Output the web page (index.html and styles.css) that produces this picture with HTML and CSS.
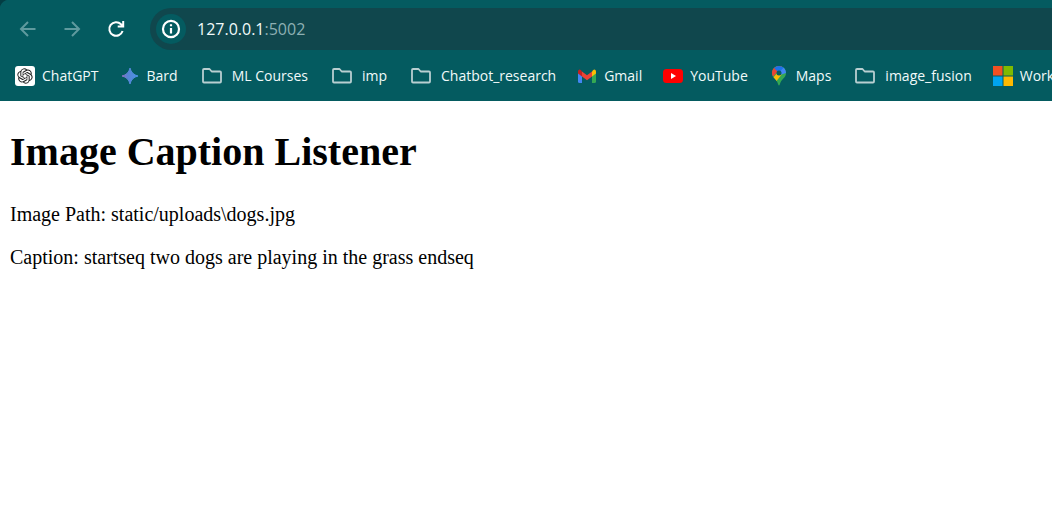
FILE: index.html
```html
<!DOCTYPE html>
<html lang="en">
<head>
<meta charset="utf-8">
<title>Image Caption Listener</title>
<link rel="stylesheet" href="styles.css">
</head>
<body>
<svg class="defs" aria-hidden="true">
  <symbol id="folder" viewBox="0 0 20 20"><path d="M2 3H7.500L9.700 5.500H18Q19 5.500 19 6.500V15.500Q19 16.500 18 16.500H2Q1 16.500 1 15.500V4Q1 3 2 3Z" fill="none" stroke="#b9cfd1" stroke-width="1.800" stroke-linejoin="round"/></symbol>
</svg>
<header class="browser">
  <div class="toolbar">
    <button class="nav dim" aria-label="Back"><svg viewBox="0 0 20 20"><path d="M17.500 10H3.500M10 3L3 10L10 17" /></svg></button>
    <button class="nav dim" aria-label="Forward"><svg viewBox="0 0 20 20"><path d="M2.500 10H16.500M10 3L17 10L10 17"/></svg></button>
    <button class="nav" aria-label="Reload"><svg viewBox="0 0 20 20"><path d="M16.600 12A6.800 6.800 0 1 1 15 5.200L17 7.200M17.200 2V7.500H11.700"/></svg></button>
    <div class="address">
      <button class="info" aria-label="Site information"><svg viewBox="0 0 20 20"><circle cx="10" cy="10" r="7.300"/><path d="M10 9V14M10 5.600V7.600"/></svg></button>
      <span class="url">127.0.0.1<span class="port">:5002</span></span>
    </div>
  </div>
  <nav class="bookmarks" aria-label="Bookmarks">
    <a class="mark" href="#"><svg viewBox="0 0 20 20"><rect width="20" height="20" rx="3" fill="#fff"/><path transform="translate(2.300 2.300) scale(.64)" fill="#222" d="M22.2819 9.8211a5.9847 5.9847 0 0 0-.5157-4.9108 6.0462 6.0462 0 0 0-6.5098-2.9A6.0651 6.0651 0 0 0 4.9807 4.1818a5.9847 5.9847 0 0 0-3.9977 2.9 6.0462 6.0462 0 0 0 .7427 7.0966 5.98 5.98 0 0 0 .511 4.9107 6.051 6.051 0 0 0 6.5146 2.9001A5.9847 5.9847 0 0 0 13.2599 24a6.0557 6.0557 0 0 0 5.7718-4.2058 5.9894 5.9894 0 0 0 3.9977-2.9001 6.0557 6.0557 0 0 0-.7475-7.0729zm-9.022 12.6081a4.4755 4.4755 0 0 1-2.8764-1.0408l.1419-.0804 4.7783-2.7582a.7948.7948 0 0 0 .3927-.6813v-6.7369l2.02 1.1686a.071.071 0 0 1 .038.052v5.5826a4.504 4.504 0 0 1-4.4945 4.4944zm-9.6607-4.1254a4.4708 4.4708 0 0 1-.5346-3.0137l.142.0852 4.783 2.7582a.7712.7712 0 0 0 .7806 0l5.8428-3.3685v2.3324a.0804.0804 0 0 1-.0332.0615L9.74 19.9502a4.4992 4.4992 0 0 1-6.1408-1.6464zM2.3408 7.8956a4.485 4.485 0 0 1 2.3655-1.9728V11.6a.7664.7664 0 0 0 .3879.6765l5.8144 3.3543-2.0201 1.1685a.0757.0757 0 0 1-.071 0l-4.8303-2.7865A4.504 4.504 0 0 1 2.3408 7.872zm16.5963 3.8558L13.1038 8.364 15.1192 7.2a.0757.0757 0 0 1 .071 0l4.8303 2.7913a4.4944 4.4944 0 0 1-.6765 8.1042v-5.6772a.79.79 0 0 0-.407-.667zm2.0107-3.0231l-.142-.0852-4.7735-2.7818a.7759.7759 0 0 0-.7854 0L9.409 9.2297V6.8974a.0662.0662 0 0 1 .0284-.0615l4.8303-2.7866a4.4992 4.4992 0 0 1 6.6802 4.66zM8.3065 12.863l-2.02-1.1638a.0804.0804 0 0 1-.038-.0567V6.0742a4.4992 4.4992 0 0 1 7.3757-3.4537l-.142.0805L8.704 5.459a.7948.7948 0 0 0-.3927.6813zm1.0976-2.3654l2.602-1.4998 2.6069 1.4998v2.9994l-2.5974 1.4997-2.6067-1.4997Z"/></svg>ChatGPT</a>
    <a class="mark" href="#"><svg viewBox="0 0 20 20"><defs><linearGradient id="spark" x1="0" x2="1"><stop stop-color="#8d6fc0"/><stop offset=".35" stop-color="#5684d4"/><stop offset="1" stop-color="#4a93e6"/></linearGradient></defs><path d="M10 2Q11.500 8.500 18 10Q11.500 11.500 10 18Q8.500 11.500 2 10Q8.500 8.500 10 2Z" fill="url(#spark)" stroke="url(#spark)"/></svg>Bard</a>
    <a class="mark folder" href="#"><svg><use href="#folder"/></svg>ML Courses</a>
    <a class="mark folder" href="#"><svg><use href="#folder"/></svg>imp</a>
    <a class="mark folder" href="#"><svg><use href="#folder"/></svg>Chatbot_research</a>
    <a class="mark" href="#"><svg viewBox="0 0 20 20"><path d="M1 6V15.500Q1 17 2.500 17H5V9Z" fill="#4285f4"/><path d="M19 6V15.500Q19 17 17.500 17H15V9Z" fill="#34a853"/><path d="M15 5.500L16 4.200Q17.500 3 18.600 4.300Q19 5 19 6V7.500L15 10.500Z" fill="#fbbc04"/><path d="M5 5.500L10 9.300L15 5.500V10.500L10 14.300L5 10.500Z" fill="#ea4335"/><path d="M5 5.500L4 4.200Q2.500 3 1.400 4.300Q1 5 1 6V7.500L5 10.500Z" fill="#c5221f"/></svg>Gmail</a>
    <a class="mark" href="#"><svg viewBox="0 0 20 20"><rect y="3" width="20" height="14" rx="3.500" fill="#f00"/><path d="M8 7L13 10L8 13Z" fill="#fff"/></svg>YouTube</a>
    <a class="mark" href="#"><svg viewBox="0 0 20 20"><defs><clipPath id="pin"><path d="M10 0C6 0 3 3 3 7C3 12 8 13 9.200 18.500Q10 20.500 10.800 18.500C12 13 17 12 17 7C17 3 14 0 10 0Z"/></clipPath></defs><g clip-path="url(#pin)"><path d="M0 0H20V20H0Z" fill="#34a853"/><path d="M0 15L14 0H0Z" fill="#ea4335"/><path d="M3 13L10 5L13 8L6 17Z" fill="#fbbc04"/><path d="M5 2L10 7L17 0H7Z" fill="#1a73e8"/><path d="M8 9L16 0L20 6L11 9Z" fill="#4285f4"/></g><circle cx="10" cy="7" r="2.500" fill="#075d62"/></svg>Maps</a>
    <a class="mark folder" href="#"><svg><use href="#folder"/></svg>image_fusion</a>
    <a class="mark" href="#"><svg viewBox="0 0 20 20"><path d="M0 0H9.500V9.500H0Z" fill="#f25022"/><path d="M10.500 0H20V9.500H10.500Z" fill="#7fba00"/><path d="M0 10.500H9.500V20H0Z" fill="#00a4ef"/><path d="M10.500 10.500H20V20H10.500Z" fill="#ffb900"/></svg>Work</a>
  </nav>
</header>
<main class="content">
  <h1>Image Caption Listener</h1>
  <p>Image Path: static/uploads\dogs.jpg</p>
  <p>Caption: startseq two dogs are playing in the grass endseq</p>
</main>
</body>
</html>
```
FILE: styles.css
```css
body {
  margin: 0;
  background: #fff;
  color: #000;
  font-family: "Liberation Serif", serif;
}

.defs {
  display: block;
  width: 0;
  height: 0;
}

.browser {
  overflow: hidden;
  background: radial-gradient(circle at 10px 10px, #045b60 10px, #033d43 11px) 0 0 / 10px 10px no-repeat, linear-gradient(#045b60, #045b60) 10px 0 no-repeat, linear-gradient(#045b60, #045b60) 0 10px no-repeat;
  color: #f1fafa;
  font-family: "Open Sans", "Noto Sans", sans-serif;
}

.toolbar {
  display: flex;
  align-items: center;
  padding: 8px 0 0 17px;
}

.nav,
.info {
  display: flex;
  padding: 0;
  border: 0;
  background: none;
  color: #fff;
}

.nav {
  flex: none;
  margin-right: 23px;
}

.nav svg,
.info svg {
  width: 22px;
  height: 22px;
  fill: none;
  stroke: currentColor;
  stroke-width: 2;
}

.nav.dim {
  margin-right: 22px;
  color: #5f9a9e;
}

.nav.dim svg {
  stroke-width: 2;
}

.nav svg {
  width: 20px;
  height: 20px;
  padding: 1px;
}

.address {
  display: flex;
  flex: 1;
  align-items: center;
  gap: 11px;
  height: 42px;
  padding-left: 6px;
  border-radius: 21px 0 0 21px;
  background: #10474d;
}

.info {
  padding: 4px;
  border-radius: 50%;
  background: #045b60;
}

.url {
  font-size: 16px;
}

.port {
  color: #8db0b3;
}

.bookmarks {
  display: flex;
  gap: 21px;
  height: 51px;
  align-items: center;
  padding-left: 15px;
}

.mark {
  display: flex;
  flex: none;
  align-items: center;
  gap: 7px;
  color: inherit;
  font-size: 14px;
  line-height: 20px;
  text-decoration: none;
}

.mark svg {
  width: 20px;
  height: 20px;
}

.folder {
  gap: 10px;
  margin-left: 3px;
}

.content {
  padding: 0 10px;
  font-size: 20px;
  line-height: 23px;
}

.content h1 {
  margin: 28px 0;
  font-size: 40px;
  line-height: 46px;
}

.content p {
  margin: 20px 0;
}
```
